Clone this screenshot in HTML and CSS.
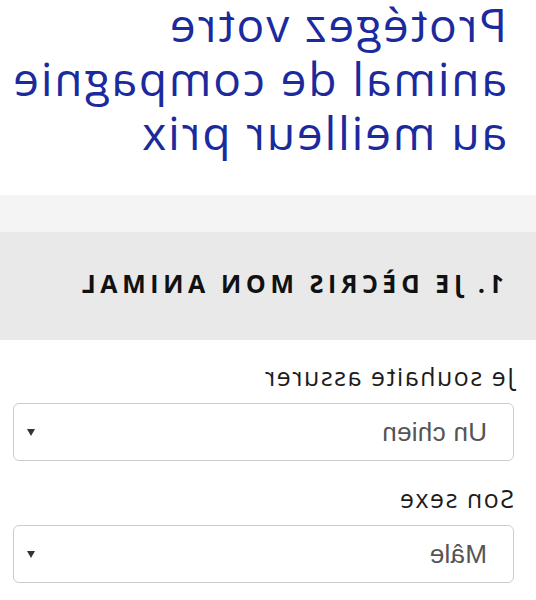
FILE: index.html
```html
<!DOCTYPE html>
<html lang="fr">
<head>
<meta charset="utf-8">
<title>Assurance animal</title>
<link rel="stylesheet" href="styles.css">
</head>
<body>
<div class="page">
  <h1 class="title">Protégez votre<br>animal de compagnie<br>au meilleur prix</h1>
  <div class="band"></div>
  <div class="step-head"><h2 class="step-title">1. JE DÈCRIS MON ANIMAL</h2></div>
  <form class="form">
    <div class="field">
      <label class="label" for="espece">Je souhaite assurer</label>
      <div class="select">
        <select id="espece" class="select-input">
          <option>Un chien</option>
          <option>Un chat</option>
        </select>
      </div>
    </div>
    <div class="field">
      <label class="label" for="sexe">Son sexe</label>
      <div class="select">
        <select id="sexe" class="select-input">
          <option>Mâle</option>
          <option>Femelle</option>
        </select>
      </div>
    </div>
  </form>
</div>
</body>
</html>
```
FILE: styles.css
```css
html, body {
  margin: 0;
  padding: 0;
  background: #fff;
}
.page {
  width: 536px;
  height: 600px;
  overflow: hidden;
  transform: scaleX(-1);
  font-family: "Open Sans", "Liberation Sans", sans-serif;
}
.title {
  margin: -3px 0 0 0;
  padding: 0 10px 0 29px;
  font-size: 46px;
  line-height: 54px;
  letter-spacing: 1.9px;
  font-weight: 400;
  color: #1b2a9c;
  white-space: nowrap;
}
.band {
  margin-top: 36px;
  height: 37px;
  background: #f4f4f4;
}
.step-head {
  height: 108px;
  box-sizing: border-box;
  background: #e9e9e9;
  display: flex;
  align-items: center;
  padding: 0 0 6px 32px;
}
.step-title {
  margin: 0;
  font-size: 25px;
  font-weight: 700;
  letter-spacing: 4.6px;
  color: #111;
}
.form {
  padding: 20px 13px 0 22px;
  display: flex;
  flex-direction: column;
  gap: 21px;
}
.field {
  display: flex;
  flex-direction: column;
  gap: 11px;
}
.label {
  font-size: 25px;
  line-height: 32px;
  letter-spacing: 1.5px;
  color: #1c1c1c;
}
.select {
  position: relative;
}
.select::after {
  content: "";
  position: absolute;
  right: 14px;
  top: 26px;
  border-left: 4.5px solid transparent;
  border-right: 4.5px solid transparent;
  border-top: 7px solid #333;
}
.select-input {
  appearance: none;
  -webkit-appearance: none;
  width: 100%;
  height: 58px;
  box-sizing: border-box;
  border: 1px solid #ccc;
  border-radius: 6px;
  background: #fff;
  padding: 0 40px 0 26px;
  font-family: "Liberation Sans", Arial, sans-serif;
  font-size: 26px;
  letter-spacing: 0.3px;
  color: #555;
}
```
